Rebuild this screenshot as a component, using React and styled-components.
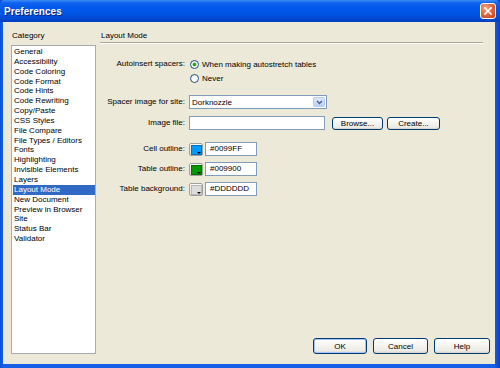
import React from "react";
import styled, { createGlobalStyle } from "styled-components";

const Global = createGlobalStyle`
  html, body { margin: 0; padding: 0; background: #0054E3; }
  body { font-family: "Liberation Sans", Arial, sans-serif; font-size: 8px; color: #000; }
  * { box-sizing: border-box; }
`;

const Window = styled.div`
  width: 500px;
  height: 368px;
  display: flex;
  flex-direction: column;
  background: linear-gradient(90deg, #0A4FD8 0px, #1660E8 3px, #1660E8 494px, #0A3EC6 500px);
  overflow: hidden;
`;

const TitleBar = styled.div`
  height: 22px;
  flex: none;
  display: flex;
  align-items: center;
  justify-content: space-between;
  padding: 0 4px 0 4px;
  background: linear-gradient(180deg, #3D8CF7 0px, #0F62EE 3px, #0058EE 8px, #0054E3 14px, #0048D0 19px, #003DBA 22px);
  border-radius: 5px 5px 0 0;
`;

const Title = styled.div`
  color: #fff;
  font-weight: bold;
  font-size: 10px;
  letter-spacing: 0.05px;
  text-shadow: 1px 1px 0 #0A1F7A;
  padding-top: 1px;
`;

const CloseBtn = styled.div`
  width: 16px;
  height: 16px;
  border: 1px solid #fff;
  border-radius: 3px;
  background: radial-gradient(circle at 35% 30%, #F0A48A 0%, #E06A45 45%, #C63F14 100%);
  display: flex;
  align-items: center;
  justify-content: center;
`;

const Body = styled.div`
  flex: 1;
  margin: 0 5px 4px 3px;
  background: #ECE9D8;
  display: grid;
  grid-template-columns: 85px 1fr;
  column-gap: 4px;
  padding: 8px 5px 10px 8px;
`;

const LeftCol = styled.div`
  display: flex;
  flex-direction: column;
`;

const Caption = styled.div`
  line-height: 11px;
  height: 11px;
  padding-left: 1px;
  margin-bottom: 4px;
`;

const ListBox = styled.div`
  flex: 1;
  background: #fff;
  border: 1px solid #A5ACB2;
  padding: 1px 0 1px 1px;
`;

const ListItem = styled.div`
  line-height: 9.85px;
  height: 9.85px;
  padding-left: 1px;
  white-space: nowrap;
  overflow: hidden;
  background: ${(p) => (p.$selected ? "#316AC5" : "transparent")};
  color: ${(p) => (p.$selected ? "#fff" : "#000")};
`;

const RightCol = styled.div`
  display: flex;
  flex-direction: column;
`;

const PanelHeader = styled.div`
  line-height: 11px;
  height: 13px;
  padding-left: 1px;
  border-bottom: 1px solid #ACA899;
  box-shadow: 0 1px 0 #fff;
  margin-right: 7px;
`;

const Form = styled.div`
  flex: 1;
  display: flex;
  flex-direction: column;
`;

const Row = styled.div`
  display: grid;
  grid-template-columns: 85px auto;
  column-gap: 4px;
  align-items: ${(p) => (p.$top ? "start" : "center")};
  margin-top: ${(p) => p.$mt}px;
`;

const Label = styled.div`
  text-align: right;
  line-height: 14px;
  white-space: nowrap;
`;

const Controls = styled.div`
  display: flex;
  align-items: center;
  gap: ${(p) => p.$gap || 0}px;
`;

const RadioGroup = styled.div`
  display: flex;
  flex-direction: column;
`;

const RadioRow = styled.div`
  display: flex;
  align-items: center;
  height: 14px;
  gap: 3px;
  padding-left: 1px;
`;

const Radio = styled.span`
  width: 9px;
  height: 9px;
  border-radius: 50%;
  border: 1px solid #1C5180;
  background: radial-gradient(circle at 60% 60%, #fff 40%, #DCD9CF 100%);
  display: inline-flex;
  align-items: center;
  justify-content: center;
  &::after {
    content: "";
    width: 3px;
    height: 3px;
    border-radius: 50%;
    background: ${(p) => (p.$checked ? "#21A121" : "transparent")};
    box-shadow: ${(p) => (p.$checked ? "0 0 0 0.5px #4CC14C" : "none")};
  }
`;

const Select = styled.div`
  width: 138px;
  height: 14px;
  border: 1px solid #7F9DB9;
  background: #fff;
  display: flex;
  align-items: center;
  justify-content: space-between;
  padding: 0 1px 0 2px;
`;

const DropBtn = styled.div`
  width: 12px;
  height: 10px;
  border-radius: 2px;
  border: 1px solid #B9CCF5;
  background: linear-gradient(180deg, #DCE6FD 0%, #BBD0FA 100%);
  display: flex;
  align-items: center;
  justify-content: center;
`;

const TextBox = styled.div`
  width: ${(p) => p.$w}px;
  height: 14px;
  border: 1px solid #7F9DB9;
  background: #fff;
  line-height: 12px;
  padding-left: 4px;
`;

const Button = styled.div`
  width: ${(p) => p.$w}px;
  height: ${(p) => p.$h || 13}px;
  border: 1px solid #003C74;
  border-radius: 3px;
  background: linear-gradient(180deg, #FFFFFF 0%, #F4F3EE 50%, #ECEBE6 85%, #D6D0C5 100%);
  display: flex;
  align-items: center;
  justify-content: center;
  box-shadow: ${(p) => (p.$default ? "inset 0 0 0 1px #A9C5F5" : "none")};
  margin-left: ${(p) => p.$ml || 0}px;
`;

const Swatch = styled.div`
  position: relative;
  width: 14px;
  height: 13px;
  border: 1px solid #A0A0A0;
  border-radius: 2px;
  background: linear-gradient(180deg, #FDFDFB, #E4E1D6);
  padding: 1px;
  &::before {
    content: "";
    display: block;
    width: 9px;
    height: 8px;
    background: ${(p) => p.$color};
    border: 1px solid ${(p) => (p.$color === "#DDDDDD" ? "#B8B8B8" : "rgba(0,0,0,0.25)")};
  }
  &::after {
    content: "";
    position: absolute;
    right: 1px;
    bottom: 1px;
    border-left: 2px solid transparent;
    border-right: 2px solid transparent;
    border-top: 2px solid #000;
  }
`;

const ButtonBar = styled.div`
  display: flex;
  justify-content: flex-end;
  gap: 6px;
  padding-right: 0px;
`;

const categories = [
  "General",
  "Accessibility",
  "Code Coloring",
  "Code Format",
  "Code Hints",
  "Code Rewriting",
  "Copy/Paste",
  "CSS Styles",
  "File Compare",
  "File Types / Editors",
  "Fonts",
  "Highlighting",
  "Invisible Elements",
  "Layers",
  "Layout Mode",
  "New Document",
  "Preview in Browser",
  "Site",
  "Status Bar",
  "Validator",
];

const colors = [
  { label: "Cell outline:", value: "#0099FF", mt: 12 },
  { label: "Table outline:", value: "#009900", mt: 6 },
  { label: "Table background:", value: "#DDDDDD", mt: 6 },
];

export default function App() {
  return (
    <>
      <Global />
      <Window>
        <TitleBar>
          <Title>Preferences</Title>
          <CloseBtn>
            <svg width="10" height="10" viewBox="0 0 10 10">
              <path d="M2 2 L8 8 M8 2 L2 8" stroke="#fff" strokeWidth="1.6" strokeLinecap="square" />
            </svg>
          </CloseBtn>
        </TitleBar>
        <Body>
          <LeftCol>
            <Caption>Category</Caption>
            <ListBox>
              {categories.map((c) => (
                <ListItem key={c} $selected={c === "Layout Mode"}>
                  {c}
                </ListItem>
              ))}
            </ListBox>
          </LeftCol>
          <RightCol>
            <PanelHeader>Layout Mode</PanelHeader>
            <Form>
              <Row $top $mt={14}>
                <Label>Autoinsert spacers:</Label>
                <RadioGroup>
                  <RadioRow>
                    <Radio $checked />
                    <span>When making autostretch tables</span>
                  </RadioRow>
                  <RadioRow>
                    <Radio />
                    <span>Never</span>
                  </RadioRow>
                </RadioGroup>
              </Row>
              <Row $mt={10}>
                <Label>Spacer image for site:</Label>
                <Controls>
                  <Select>
                    <span>Dorknozzle</span>
                    <DropBtn>
                      <svg width="7" height="5" viewBox="0 0 7 5">
                        <path d="M1 1 L3.5 3.5 L6 1" stroke="#4D6185" strokeWidth="1.4" fill="none" />
                      </svg>
                    </DropBtn>
                  </Select>
                </Controls>
              </Row>
              <Row $mt={7}>
                <Label>Image file:</Label>
                <Controls>
                  <TextBox $w={136} />
                  <Button $w={51} $ml={7}>Browse...</Button>
                  <Button $w={53} $ml={4}>Create...</Button>
                </Controls>
              </Row>
              {colors.map((c) => (
                <Row key={c.label} $mt={c.mt}>
                  <Label>{c.label}</Label>
                  <Controls $gap={2}>
                    <Swatch $color={c.value} />
                    <TextBox $w={52}>{c.value}</TextBox>
                  </Controls>
                </Row>
              ))}
            </Form>
            <ButtonBar>
              <Button $w={54} $h={16} $default>OK</Button>
              <Button $w={55} $h={16}>Cancel</Button>
              <Button $w={56} $h={16}>Help</Button>
            </ButtonBar>
          </RightCol>
        </Body>
      </Window>
    </>
  );
}
